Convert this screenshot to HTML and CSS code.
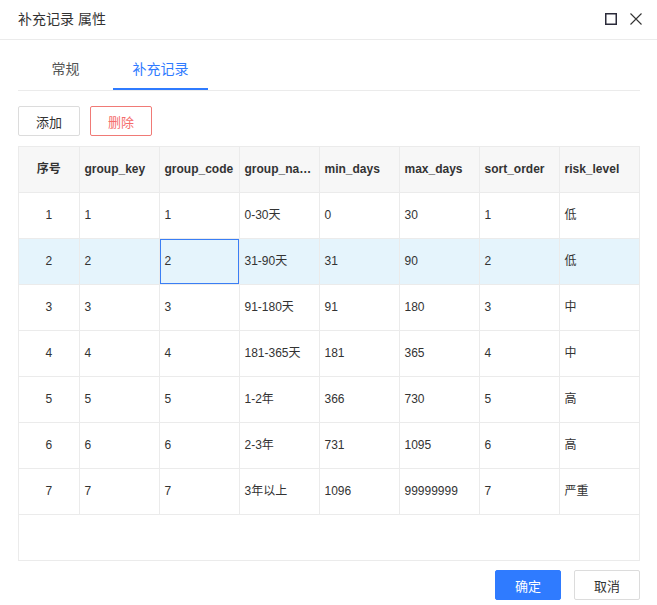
FILE: index.html
```
<!DOCTYPE html>
<html lang="zh-CN">
<head>
    <meta charset="UTF-8">
    <title>补充记录 属性</title>
    <link rel="stylesheet" href="styles.css">
</head>
<body>
    <div class="dialog">
        <div class="dialog-header">
            <span class="dialog-title">补充记录 属性</span>
            <div class="dialog-actions">
                <svg width="12" height="12" viewBox="0 0 12 12"><rect x="0.75" y="0.75" width="10.5" height="10.5" fill="none" stroke="#2b2b3a" stroke-width="1.5"/></svg>
                <svg width="12" height="12" viewBox="0 0 12 12"><path d="M0.5 0.5 L11.5 11.5 M11.5 0.5 L0.5 11.5" stroke="#333" stroke-width="1.1" fill="none"/></svg>
            </div>
        </div>

        <div class="dialog-body">
            <div class="tabs">
                <div class="tab">常规</div>
                <div class="tab active">补充记录</div>
            </div>

            <div class="toolbar">
                <button class="btn">添加</button>
                <button class="btn btn-danger">删除</button>
            </div>

            <div class="table-wrap">
                <table class="grid">
                    <colgroup>
                        <col style="width: 60px">
                        <col style="width: 80px">
                        <col style="width: 80px">
                        <col style="width: 80px">
                        <col style="width: 80px">
                        <col style="width: 80px">
                        <col style="width: 80px">
                        <col>
                    </colgroup>
                    <thead>
                        <tr>
                            <th class="center">序号</th>
                            <th>group_key</th>
                            <th>group_code</th>
                            <th>group_name</th>
                            <th>min_days</th>
                            <th>max_days</th>
                            <th>sort_order</th>
                            <th>risk_level</th>
                        </tr>
                    </thead>
                    <tbody>
                        <tr><td class="center">1</td><td>1</td><td>1</td><td>0-30天</td><td>0</td><td>30</td><td>1</td><td>低</td></tr>
                        <tr class="selected"><td class="center">2</td><td>2</td><td class="focus">2</td><td>31-90天</td><td>31</td><td>90</td><td>2</td><td>低</td></tr>
                        <tr><td class="center">3</td><td>3</td><td>3</td><td>91-180天</td><td>91</td><td>180</td><td>3</td><td>中</td></tr>
                        <tr><td class="center">4</td><td>4</td><td>4</td><td>181-365天</td><td>181</td><td>365</td><td>4</td><td>中</td></tr>
                        <tr><td class="center">5</td><td>5</td><td>5</td><td>1-2年</td><td>366</td><td>730</td><td>5</td><td>高</td></tr>
                        <tr><td class="center">6</td><td>6</td><td>6</td><td>2-3年</td><td>731</td><td>1095</td><td>6</td><td>高</td></tr>
                        <tr><td class="center">7</td><td>7</td><td>7</td><td>3年以上</td><td>1096</td><td>99999999</td><td>7</td><td>严重</td></tr>
                    </tbody>
                </table>
            </div>

            <div class="footer">
                <button class="btn btn-primary">确定</button>
                <button class="btn">取消</button>
            </div>
        </div>
    </div>
</body>
</html>
```

FILE: styles.css
```
* {
    margin: 0;
    padding: 0;
    box-sizing: border-box;
}

body {
    background: #fff;
    font-family: "Liberation Sans", "Noto Sans CJK SC", sans-serif;
    color: #333;
}

.dialog {
    width: 657px;
    height: 605px;
    background: #fff;
}

.dialog-header {
    height: 40px;
    border-bottom: 1px solid #ebebeb;
    display: flex;
    align-items: center;
    justify-content: space-between;
    padding: 0 15px 0 18px;
}

.dialog-title {
    font-size: 14px;
    color: #333;
    margin-top: -4px;
}

.dialog-actions {
    display: flex;
    gap: 13px;
    margin-top: -2px;
}

.dialog-body {
    padding: 10px 17px 0 18px;
}

.tabs {
    display: flex;
    border-bottom: 1px solid #ebebeb;
}

.tab {
    width: 95px;
    height: 40px;
    line-height: 38px;
    text-align: center;
    font-size: 14px;
    color: #555;
    border-bottom: 2px solid transparent;
}

.tab.active {
    color: #2f7bff;
    border-bottom-color: #2f7bff;
}

.toolbar {
    display: flex;
    gap: 10px;
    margin-top: 15px;
}

.btn {
    width: 62px;
    height: 30px;
    border: 1px solid #dcdcdc;
    border-radius: 2px;
    background: #fff;
    color: #333;
    font-family: inherit;
    font-size: 13px;
}

.btn-danger {
    border-color: #f07a76;
    color: #f56c6c;
}

.btn-primary {
    background: #2f7bff;
    border-color: #2f7bff;
    color: #fff;
}

.table-wrap {
    margin-top: 10px;
    height: 415px;
    border: 1px solid #ebebeb;
}

.grid {
    width: 100%;
    border-collapse: collapse;
    table-layout: fixed;
    font-size: 12px;
}

.grid th,
.grid td {
    height: 46px;
    padding: 0 5px;
    line-height: 16px;
    text-align: left;
    border-right: 1px solid #ebebeb;
    border-bottom: 1px solid #ebebeb;
    white-space: nowrap;
    overflow: hidden;
    text-overflow: ellipsis;
    color: #333;
}

.grid th:last-child,
.grid td:last-child {
    border-right: none;
}

.grid th {
    height: 45px;
    background: #f7f7f7;
    font-weight: bold;
}

.grid .center {
    text-align: center;
}

.grid tr.selected td {
    background: #e5f4fc;
}

.grid td.focus {
    box-shadow: inset 0 0 0 1px #3a7ef5;
}

.footer {
    display: flex;
    justify-content: flex-end;
    gap: 13px;
    margin-top: 9px;
}

.footer .btn {
    width: 66px;
}
```
